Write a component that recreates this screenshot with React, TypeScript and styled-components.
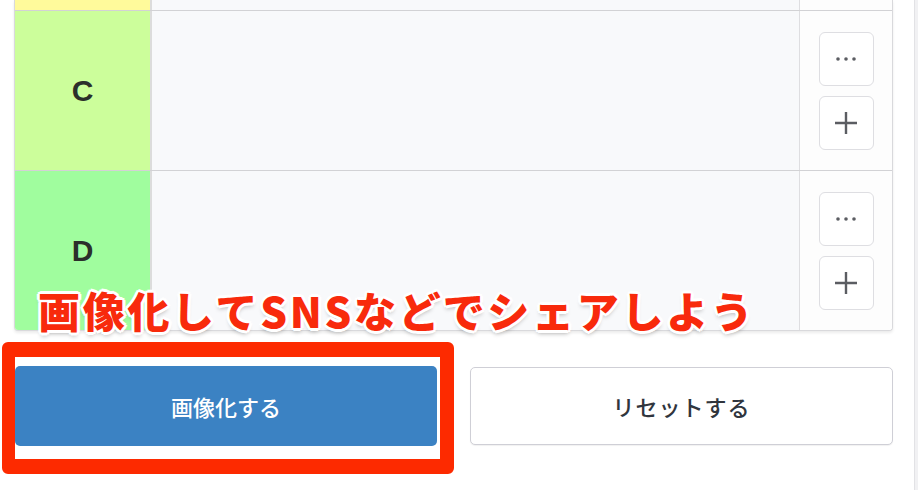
import React from "react";
import styled, { createGlobalStyle } from "styled-components";

const GlobalStyle = createGlobalStyle`
  html, body {
    margin: 0;
    padding: 0;
    background: #ffffff;
    font-family: "Noto Sans CJK JP", "Liberation Sans", sans-serif;
  }
`;

const Page = styled.div`
  position: relative;
  width: 918px;
  height: 490px;
  overflow: hidden;
  display: flex;
`;

const Main = styled.div`
  flex: 1;
  padding: 0 0 0 14px;
  box-sizing: border-box;
  width: 914px;
`;

const EdgeBar = styled.div`
  width: 4px;
  height: 100%;
  background: #f1f1f3;
  border-left: 1px solid #e2e2e5;
  box-sizing: border-box;
`;

const Table = styled.div`
  width: 877px;
  border: 1px solid #d9d9dc;
  border-top: none;
  border-radius: 0 0 4px 4px;
  box-shadow: 0 2px 3px rgba(0, 0, 0, 0.08);
  overflow: hidden;
  background: #fff;
`;

const Row = styled.div<{ $partial?: boolean }>`
  display: grid;
  grid-template-columns: 137px 1fr 93px;
  height: ${(p) => (p.$partial ? "10px" : "159px")};
  & + & {
    border-top: 1px solid #d2d2d5;
  }
`;

const Label = styled.div<{ $bg: string }>`
  background: ${(p) => p.$bg};
  border-right: 2px solid #dcdcdc;
  display: flex;
  align-items: center;
  justify-content: center;
  font-family: "Liberation Sans", Arial, sans-serif;
  font-weight: 700;
  font-size: 30px;
  color: #2b2f2b;
`;

const Items = styled.div`
  background: #f8f9fb;
`;

const Actions = styled.div`
  border-left: 1px solid #dedee1;
  background: #fdfdfd;
  display: flex;
  flex-direction: column;
  align-items: center;
  justify-content: center;
  gap: 10px;
`;

const IconButton = styled.button`
  width: 55px;
  height: 54px;
  border: 1px solid #dedee2;
  border-radius: 6px;
  background: #fff;
  display: flex;
  align-items: center;
  justify-content: center;
  padding: 0;
  color: #5b5d62;
`;

const Footer = styled.div`
  display: grid;
  grid-template-columns: 422px 423px;
  column-gap: 33px;
  margin-top: 35px;
  margin-left: 1px;
`;

const ActionButton = styled.button<{ $primary?: boolean }>`
  height: ${(p) => (p.$primary ? "80px" : "78px")};
  margin-top: ${(p) => (p.$primary ? "0" : "1px")};
  border-radius: 5px;
  border: ${(p) => (p.$primary ? "none" : "1px solid #cfcfd6")};
  background: ${(p) => (p.$primary ? "#3b82c3" : "#ffffff")};
  color: ${(p) => (p.$primary ? "#ffffff" : "#30353d")};
  font-family: "Noto Sans CJK JP", sans-serif;
  font-size: 22px;
  font-weight: 500;
  letter-spacing: ${(p) => (p.$primary ? "0" : "1px")};
  box-shadow: ${(p) => (p.$primary ? "none" : "0 1px 1px rgba(0,0,0,0.06)")};
`;

const Highlight = styled.div`
  position: absolute;
  left: 2px;
  top: 342px;
  width: 452px;
  height: 132px;
  box-sizing: border-box;
  border: solid #fd2a00;
  border-width: 15px 14px 15px 13px;
  border-radius: 6px;
  pointer-events: none;
`;

const Caption = styled.div`
  position: absolute;
  left: 38px;
  top: 282px;
  font-family: "Noto Sans CJK JP", sans-serif;
  font-weight: 900;
  font-size: 42px;
  line-height: 56px;
  letter-spacing: 2.7px;
  color: #f82a0c;
  white-space: nowrap;
  text-shadow:
    3px 0 0 #fff, -3px 0 0 #fff, 0 3px 0 #fff, 0 -3px 0 #fff,
    2px 2px 0 #fff, -2px 2px 0 #fff, 2px -2px 0 #fff, -2px -2px 0 #fff,
    0 4px 4px rgba(0, 0, 0, 0.25);
`;

const Dots = () => (
  <svg width="26" height="8" viewBox="0 0 26 8">
    <circle cx="5" cy="4" r="1.8" fill="currentColor" />
    <circle cx="13" cy="4" r="1.8" fill="currentColor" />
    <circle cx="21" cy="4" r="1.8" fill="currentColor" />
  </svg>
);

const Plus = () => (
  <svg width="24" height="24" viewBox="0 0 24 24">
    <path d="M12 1v22M1 12h22" stroke="currentColor" strokeWidth="2.4" />
  </svg>
);

const tiers = [
  { name: "C", color: "#ccfe9b" },
  { name: "D", color: "#a0fd9e" },
];

export default function App() {
  return (
    <Page>
      <GlobalStyle />
      <Main>
        <Table>
          <Row $partial>
            <Label $bg="#fffa9b" />
            <Items />
            <Actions />
          </Row>
          {tiers.map((t) => (
            <Row key={t.name}>
              <Label $bg={t.color}>{t.name}</Label>
              <Items />
              <Actions>
                <IconButton type="button">
                  <Dots />
                </IconButton>
                <IconButton type="button">
                  <Plus />
                </IconButton>
              </Actions>
            </Row>
          ))}
        </Table>
        <Footer>
          <ActionButton type="button" $primary>
            画像化する
          </ActionButton>
          <ActionButton type="button">リセットする</ActionButton>
        </Footer>
      </Main>
      <EdgeBar />
      <Highlight />
      <Caption>画像化してSNSなどでシェアしよう</Caption>
    </Page>
  );
}
